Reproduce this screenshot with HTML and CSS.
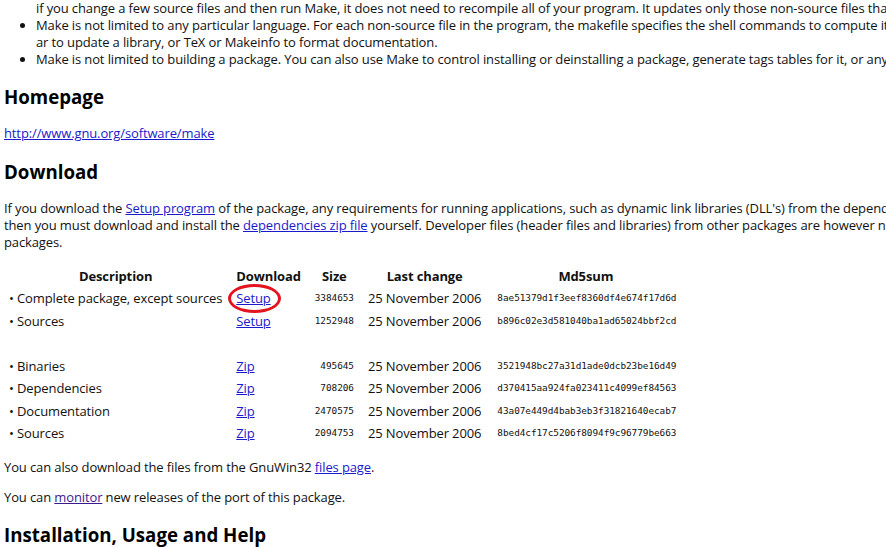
FILE: index.html
```html
<!DOCTYPE html>
<html lang="en">
<head>
<meta charset="utf-8">
<title>Make for Windows</title>
<link rel="stylesheet" href="styles.css">
</head>
<body>
<div class="page">
  <ul class="features">
    <li class="cont">if you change a few source files and then run Make, it does not need to recompile all of your program. It updates only those non-source files that depend directly or indirectly on the source files that you changed.</li>
    <li>Make is not limited to any particular language. For each non-source file in the program, the makefile specifies the shell commands to compute it. These shell commands can run a compiler to produce an object file, the linker to produce an executable,<br>ar to update a library, or TeX or Makeinfo to format documentation.</li>
    <li>Make is not limited to building a package. You can also use Make to control installing or deinstalling a package, generate tags tables for it, or anything else you want to do often enough to make it worth while writing down how to do it.</li>
  </ul>

  <h2>Homepage</h2>
  <p><a href="#">http://www.gnu.org/software/make</a></p>

  <h2>Download</h2>
  <p class="lines">If you download the <a href="#">Setup program</a> of the package, any requirements for running applications, such as dynamic link libraries (DLL's) from the dependencies as listed below under Requirements, are already included. If you download the package as Zip files,<br>then you must download and install the <a href="#">dependencies zip file</a> yourself. Developer files (header files and libraries) from other packages are however not included; so if you wish to develop your own applications, you must separately install the required<br>packages.</p>

  <table class="dl">
    <thead>
      <tr><th>Description</th><th>Download</th><th>Size</th><th>Last change</th><th>Md5sum</th></tr>
    </thead>
    <tbody>
      <tr><td>• Complete package, except sources</td><td><span class="mark"><a href="#">Setup</a><span class="circle"></span></span></td><td class="num">3384653</td><td>25 November 2006</td><td class="md5">8ae51379d1f3eef8360df4e674f17d6d</td></tr>
      <tr><td>• Sources</td><td><a href="#">Setup</a></td><td class="num">1252948</td><td>25 November 2006</td><td class="md5">b896c02e3d581040ba1ad65024bbf2cd</td></tr>
      <tr class="blank"><td colspan="5">&nbsp;</td></tr>
      <tr><td>• Binaries</td><td><a href="#">Zip</a></td><td class="num">495645</td><td>25 November 2006</td><td class="md5">3521948bc27a31d1ade0dcb23be16d49</td></tr>
      <tr><td>• Dependencies</td><td><a href="#">Zip</a></td><td class="num">708206</td><td>25 November 2006</td><td class="md5">d370415aa924fa023411c4099ef84563</td></tr>
      <tr><td>• Documentation</td><td><a href="#">Zip</a></td><td class="num">2470575</td><td>25 November 2006</td><td class="md5">43a07e449d4bab3eb3f31821640ecab7</td></tr>
      <tr><td>• Sources</td><td><a href="#">Zip</a></td><td class="num">2094753</td><td>25 November 2006</td><td class="md5">8bed4cf17c5206f8094f9c96779be663</td></tr>
    </tbody>
  </table>

  <p>You can also download the files from the GnuWin32 <a href="#">files page</a>.</p>
  <p>You can <a href="#" class="visited">monitor</a> new releases of the port of this package.</p>

  <h2>Installation, Usage and Help</h2>
</div>
</body>
</html>
```

FILE: styles.css
```css
html, body {
  margin: 0;
  padding: 0;
  background: #ffffff;
  overflow: hidden;
}
body {
  font-family: "Open Sans", "Noto Sans", sans-serif;
  font-size: 13px;
  line-height: 17px;
  letter-spacing: -0.12px;
  color: #111111;
}
.page {
  width: 3000px;
  padding-left: 4px;
}
.features li,
.lines {
  white-space: nowrap;
}
a {
  color: #1a1acc;
  text-decoration: underline;
}
a.visited {
  color: #3a1a8f;
}
.features {
  margin: -0.5px 0 13px 0;
  padding-left: 32px;
  list-style: disc;
}
.features li.cont {
  list-style: none;
}
h2 {
  font-size: 18.7px;
  line-height: 24px;
  font-weight: 700;
  letter-spacing: 0;
  margin: 17.5px 0 16px 0;
  color: #000;
}
p {
  margin: 13px 0;
}
.dl {
  border-collapse: collapse;
  margin: 14px 0 14px 0;
}
.dl th, .dl td {
  padding: 3px 7px;
  line-height: 16.5px;
  white-space: nowrap;
  text-align: left;
}
.dl th {
  text-align: center;
  font-weight: 700;
}
.dl td:first-child, .dl th:first-child {
  padding-left: 5px;
}
.dl td.num {
  text-align: right;
  font-family: "DejaVu Sans Mono", monospace;
  font-size: 9.4px;
  letter-spacing: -0.05px;
}
.dl td.md5 {
  font-family: "DejaVu Sans Mono", monospace;
  font-size: 9.4px;
  letter-spacing: -0.05px;
  padding-left: 9px;
}
.mark {
  position: relative;
  display: inline-block;
}
.circle {
  position: absolute;
  left: -8px;
  top: -6px;
  width: 47px;
  height: 23px;
  border: 3px solid #e3131f;
  border-radius: 50%;
  pointer-events: none;
}
```
